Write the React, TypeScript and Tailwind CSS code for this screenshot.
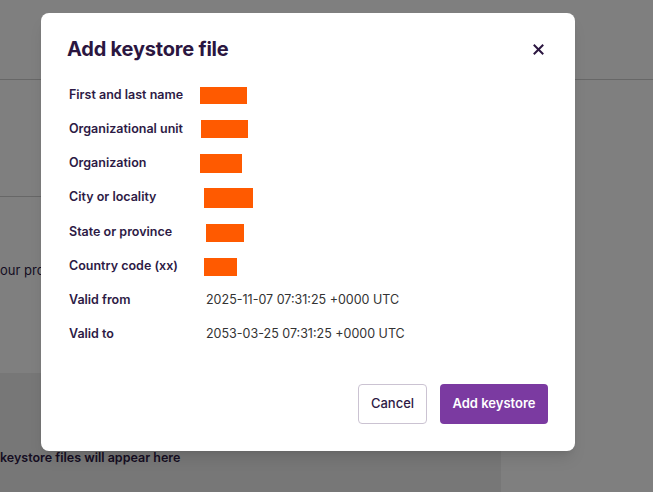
import React from 'react';

const rows: { label: string; box?: { ml: number; w: number; h: number }; value?: string; h: number }[] = [
  { label: 'First and last name', box: { ml: 0, w: 47, h: 17 }, h: 33 },
  { label: 'Organizational unit', box: { ml: 1, w: 47, h: 18 }, h: 34 },
  { label: 'Organization', box: { ml: 0, w: 42, h: 19 }, h: 34 },
  { label: 'City or locality', box: { ml: 4, w: 49, h: 20 }, h: 35 },
  { label: 'State or province', box: { ml: 6, w: 38, h: 18 }, h: 35 },
  { label: 'Country code (xx)', box: { ml: 4, w: 33, h: 18 }, h: 33 },
  { label: 'Valid from', value: '2025-11-07 07:31:25 +0000 UTC', h: 34 },
  { label: 'Valid to', value: '2053-03-25 07:31:25 +0000 UTC', h: 34 },
];

export default function App() {
  return (
    <div className="relative h-[492px] w-[653px] overflow-hidden bg-white text-[#2d1a45]" style={{ fontFamily: 'Inter, "Noto Sans", sans-serif' }}>
      {/* page behind the modal */}
      <header className="h-[80px] border-b border-[#cfcfcf]" />
      <div className="flex h-[412px]">
        <div className="flex w-[501px] flex-col">
          <div className="h-[117px] border-b border-[#cfcfcf]" />
          <div className="h-[176px] pt-[64px] text-[13px] text-[#2d1a45]">our project</div>
          <div className="flex-1 bg-[#efefef] pt-[76px] text-[12.5px] font-semibold text-[#2d1a45]">keystore files will appear here</div>
        </div>
        <div className="flex-1" />
      </div>

      {/* overlay */}
      <div className="absolute inset-0 bg-black/50" />

      {/* dialog */}
      <div className="absolute left-[41px] top-[13px] w-[534px] rounded-lg bg-white pb-[27px] pl-7 pr-[27px] pt-6 shadow-lg">
        <div className="flex h-6 items-center justify-between">
          <h2 className="-ml-[2px] text-[20px] font-bold leading-6 tracking-[-0.2px] text-[#2b1640]">Add keystore file</h2>
          <button className="-mr-[2px] flex h-6 w-6 items-center justify-center text-[#2b1640]">
            <svg width="11" height="11" viewBox="0 0 11 11" fill="none" stroke="currentColor" strokeWidth="2" strokeLinecap="square">
              <path d="M1.5 1.5l8 8M9.5 1.5l-8 8" />
            </svg>
          </button>
        </div>

        <div className="mt-[18px] flex flex-col">
          {rows.map((r) => (
            <div key={r.label} className="flex items-center" style={{ height: r.h }}>
              <div className="w-[131px] text-[12.5px] font-semibold text-[#2d1a45]">{r.label}</div>
              {r.box && (
                <div className="bg-[#ff5a00]" style={{ marginLeft: r.box.ml, width: r.box.w, height: r.box.h }} />
              )}
              {r.value && <div className="ml-[6px] text-[12.5px] text-[#333333]">{r.value}</div>}
            </div>
          ))}
        </div>

        <div className="mt-[33px] flex justify-end gap-[13px]">
          <button className="h-10 w-[69px] rounded border border-[#cbc3d2] bg-white text-[13px] font-medium text-[#2d1a45]">Cancel</button>
          <button className="h-10 w-[108px] rounded bg-[#7b3aa1] text-[13px] font-semibold text-white">Add keystore</button>
        </div>
      </div>
    </div>
  );
}
